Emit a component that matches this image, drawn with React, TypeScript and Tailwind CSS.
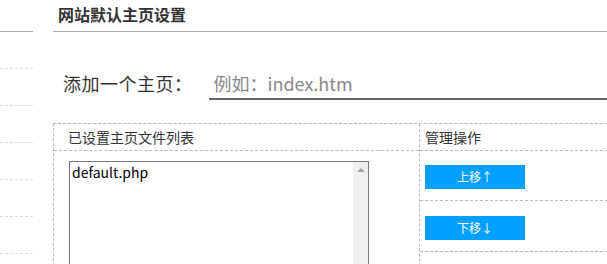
import React from "react";

const font = { fontFamily: '"Noto Sans CJK SC", "Noto Sans", sans-serif' };

export default function App() {
  return (
    <div className="flex w-[607px] h-[264px] overflow-hidden bg-white text-[#333]" style={font}>
      {/* sidebar */}
      <div className="w-[33px] shrink-0 flex flex-col">
        <div className="h-[32px] shrink-0 border-b border-[#aaa]" />
        <div className="h-[37px] shrink-0 border-b border-dashed border-[#ddd]" />
        <div className="h-[37px] shrink-0 border-b border-dashed border-[#ddd]" />
        <div className="h-[37px] shrink-0 border-b border-dashed border-[#ddd]" />
        <div className="h-[37px] shrink-0 border-b border-dashed border-[#ddd]" />
        <div className="h-[37px] shrink-0 border-b border-dashed border-[#ddd]" />
        <div className="h-[37px] shrink-0 border-b border-dashed border-[#ddd]" />
      </div>

      {/* main */}
      <div className="ml-[20px] flex-1 min-w-0 flex flex-col">
        <div className="h-[32px] shrink-0 border-b border-[#aaa] pl-[5px] pt-[3px] text-[16px] font-bold leading-[22px] text-[#333]">
          网站默认主页设置
        </div>

        <div className="flex shrink-0 items-end h-[68px] pl-[10px]">
          <span className="text-[18px] leading-[26px] mb-[4px] text-[#333] tracking-[0.5px]">添加一个主页：</span>
          <div className="ml-[16px] flex-1 border-b-2 border-[#666] h-[30px] flex items-end pb-[3px] pl-[5px]">
            <span className="text-[18px] leading-[24px] text-[#888]">例如：index.htm</span>
          </div>
        </div>

        <div className="mt-[23px] shrink-0 w-[600px] border-l border-t border-dashed border-[#bbb] flex">
          <div className="w-[366px] border-r border-dashed border-[#bbb] flex flex-col">
            <div className="h-[27px] shrink-0 border-b border-dashed border-[#bbb] pl-[14px] text-[14px] leading-[27px] text-[#333]">
              已设置主页文件列表
            </div>
            <div className="pl-[15px] pt-[10px]">
              <div className="w-[300px] h-[200px] border border-[#777] flex">
                <div className="flex-1 pl-[2px] text-[14px] leading-[20px] text-[#000]">default.php</div>
                <div className="w-[15px] bg-[#f0f0f0] flex justify-center pt-[6px]">
                  <div className="w-0 h-0 border-l-[4px] border-r-[4px] border-b-[4px] border-l-transparent border-r-transparent border-b-[#a3a3a3]" />
                </div>
              </div>
            </div>
          </div>
          <div className="flex-1 flex flex-col">
            <div className="h-[27px] shrink-0 border-b border-dashed border-[#bbb] pl-[5px] text-[14px] leading-[27px] text-[#333]">
              管理操作
            </div>
            <div className="h-[50px] shrink-0 border-b border-dashed border-[#bbb] pl-[5px] pt-[12px]">
              <button className="w-[100px] h-[24px] bg-[#00a0ff] text-white text-[12px] leading-[24px]">上移↑</button>
            </div>
            <div className="h-[51px] shrink-0 border-b border-dashed border-[#bbb] pl-[5px] pt-[13px]">
              <button className="w-[100px] h-[24px] bg-[#00a0ff] text-white text-[12px] leading-[24px]">下移↓</button>
            </div>
            <div className="h-[30px] shrink-0" />
          </div>
        </div>
      </div>
    </div>
  );
}
